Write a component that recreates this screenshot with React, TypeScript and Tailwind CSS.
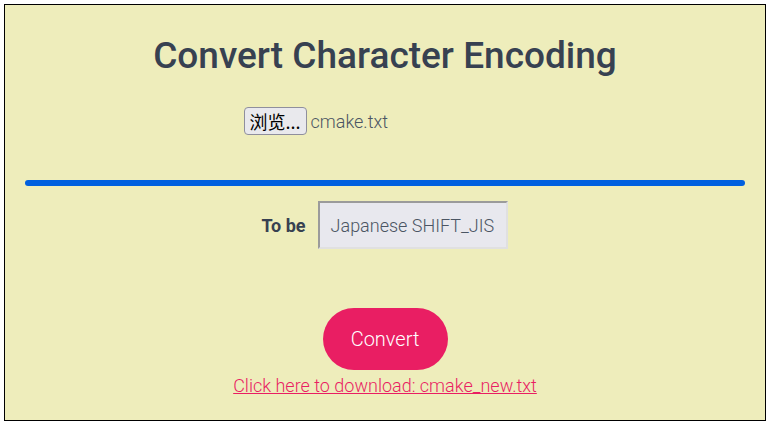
import React from "react";

const roboto = { fontFamily: "Roboto, 'Noto Sans', sans-serif" };

export default function App() {
  return (
    <div className="w-[769px] h-[426px] bg-white pl-1 pt-1">
      <div
        className="w-[762px] h-[417px] border border-black bg-[#eeedbb] flex flex-col items-center px-5"
        style={roboto}
      >
        <h1 className="mt-[29px] text-[37px] leading-[43px] font-medium text-[#374151] whitespace-nowrap">
          Convert Character Encoding
        </h1>

        {/* file picker, native look */}
        <div className="mt-[30px] w-[283px] flex items-center gap-[4px]">
          <button
            type="button"
            className="h-[28px] px-[5px] rounded-[4px] border border-[#8f8f9d] bg-[#e9e9ed] text-[18px] leading-none text-black"
            style={{ fontFamily: "'Noto Sans CJK SC', 'Liberation Sans', sans-serif" }}
          >
            浏览...
          </button>
          <span className="text-[18px] font-light text-[#4b5563]">cmake.txt</span>
        </div>

        <div className="mt-[45px] w-full h-[6px] rounded-full bg-[#0060df]" />

        <div className="mt-[15px] flex items-center gap-[12px] pr-[1px]">
          <span className="text-[18px] font-bold text-[#374151]">To be</span>
          <div className="w-[190px] h-[48px] flex items-center pl-[11px] pr-[8px] whitespace-nowrap bg-[#e8e8ee] border-2 border-t-[#9b9b9b] border-l-[#9b9b9b] border-b-[#e0e0e0] border-r-[#e0e0e0] text-[18px] font-light text-[#4b5563]">
            Japanese SHIFT_JIS
          </div>
        </div>

        <button
          type="button"
          className="mt-[59px] w-[125px] h-[62px] rounded-full bg-[#e91e63] text-white text-[20px] font-light"
        >
          Convert
        </button>

        <a href="#" className="mt-[5px] text-[18px] font-light text-[#e91e63] underline leading-[22px]">
          Click here to download: cmake_new.txt
        </a>
      </div>
    </div>
  );
}
